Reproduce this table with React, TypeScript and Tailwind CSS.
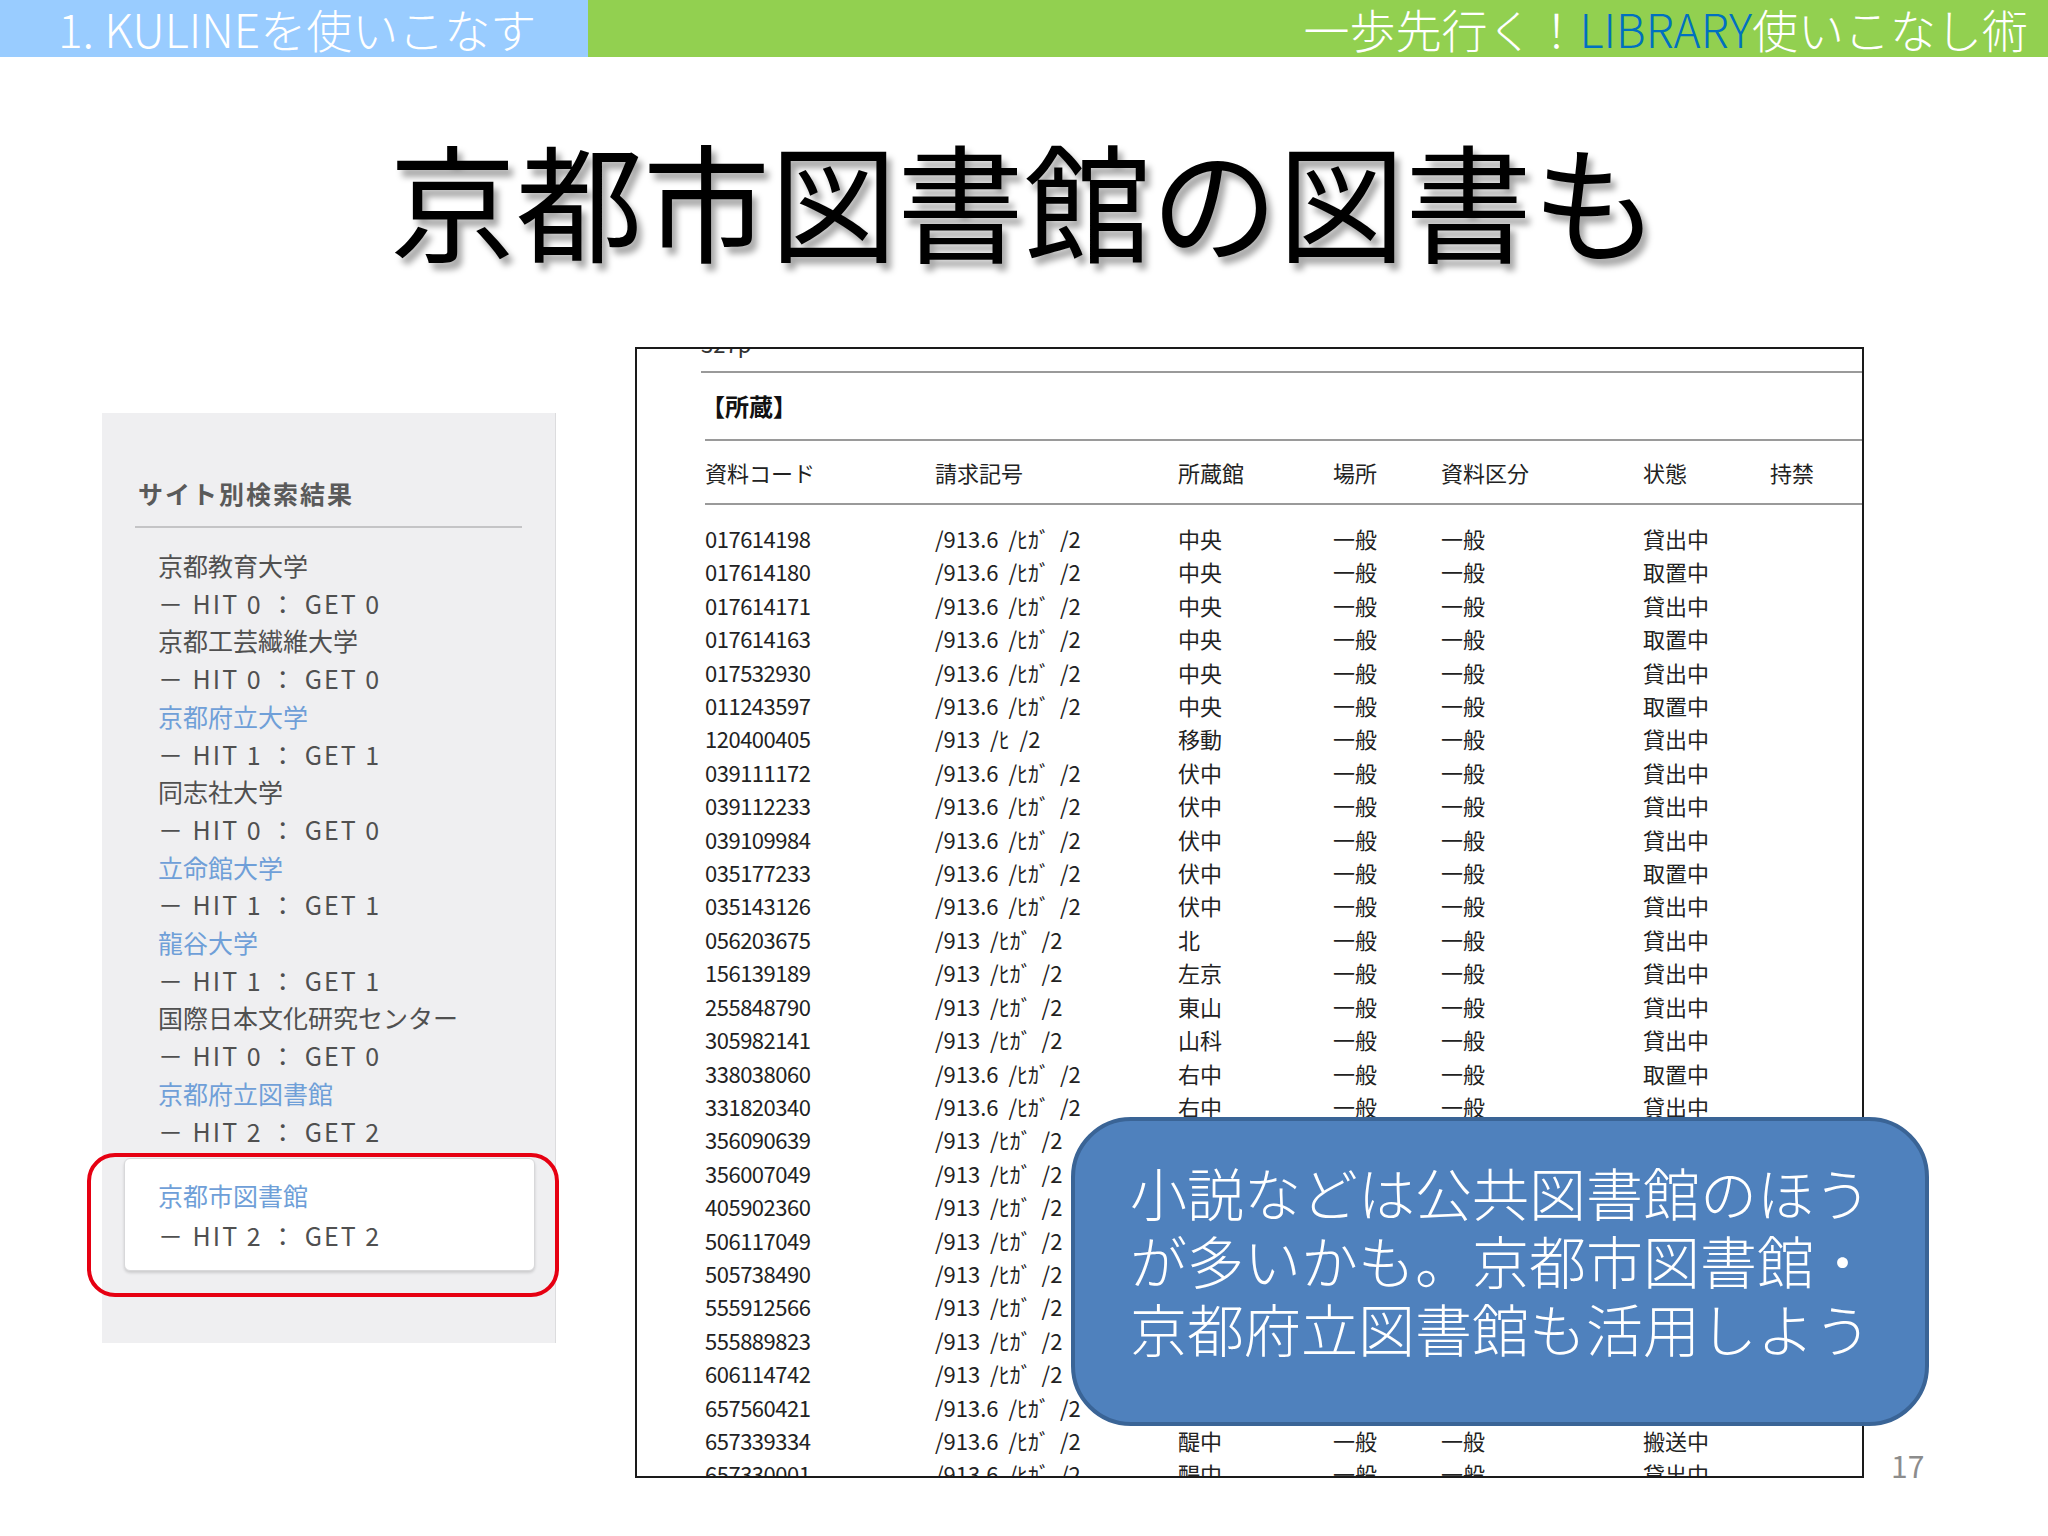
import React from 'react';

const JP = '[font-family:"Noto_Sans_CJK_JP","Noto_Sans",sans-serif]';

type Site = { name: string; hit: number; link?: boolean };

const sites: Site[] = [
  { name: '京都教育大学', hit: 0 },
  { name: '京都工芸繊維大学', hit: 0 },
  { name: '京都府立大学', hit: 1, link: true },
  { name: '同志社大学', hit: 0 },
  { name: '立命館大学', hit: 1, link: true },
  { name: '龍谷大学', hit: 1, link: true },
  { name: '国際日本文化研究センター', hit: 0 },
  { name: '京都府立図書館', hit: 2, link: true },
];

// code, call number, branch, status
const rows: string[][] = [
  ['017614198', '/913.6 /ﾋｶﾞ /2', '中央', '貸出中'],
  ['017614180', '/913.6 /ﾋｶﾞ /2', '中央', '取置中'],
  ['017614171', '/913.6 /ﾋｶﾞ /2', '中央', '貸出中'],
  ['017614163', '/913.6 /ﾋｶﾞ /2', '中央', '取置中'],
  ['017532930', '/913.6 /ﾋｶﾞ /2', '中央', '貸出中'],
  ['011243597', '/913.6 /ﾋｶﾞ /2', '中央', '取置中'],
  ['120400405', '/913 /ﾋ /2', '移動', '貸出中'],
  ['039111172', '/913.6 /ﾋｶﾞ /2', '伏中', '貸出中'],
  ['039112233', '/913.6 /ﾋｶﾞ /2', '伏中', '貸出中'],
  ['039109984', '/913.6 /ﾋｶﾞ /2', '伏中', '貸出中'],
  ['035177233', '/913.6 /ﾋｶﾞ /2', '伏中', '取置中'],
  ['035143126', '/913.6 /ﾋｶﾞ /2', '伏中', '貸出中'],
  ['056203675', '/913 /ﾋｶﾞ /2', '北', '貸出中'],
  ['156139189', '/913 /ﾋｶﾞ /2', '左京', '貸出中'],
  ['255848790', '/913 /ﾋｶﾞ /2', '東山', '貸出中'],
  ['305982141', '/913 /ﾋｶﾞ /2', '山科', '貸出中'],
  ['338038060', '/913.6 /ﾋｶﾞ /2', '右中', '取置中'],
  ['331820340', '/913.6 /ﾋｶﾞ /2', '右中', '貸出中'],
  ['356090639', '/913 /ﾋｶﾞ /2', '右中', '貸出中'],
  ['356007049', '/913 /ﾋｶﾞ /2', '右中', '貸出中'],
  ['405902360', '/913 /ﾋｶﾞ /2', '西', '貸出中'],
  ['506117049', '/913 /ﾋｶﾞ /2', '南', '貸出中'],
  ['505738490', '/913 /ﾋｶﾞ /2', '南', '貸出中'],
  ['555912566', '/913 /ﾋｶﾞ /2', '久我', '貸出中'],
  ['555889823', '/913 /ﾋｶﾞ /2', '久我', '貸出中'],
  ['606114742', '/913 /ﾋｶﾞ /2', '洛西', '貸出中'],
  ['657560421', '/913.6 /ﾋｶﾞ /2', '醍中', '貸出中'],
  ['657339334', '/913.6 /ﾋｶﾞ /2', '醍中', '搬送中'],
  ['657330001', '/913.6 /ﾋｶﾞ /2', '醍中', '貸出中'],
];

const headers = ['資料コード', '請求記号', '所蔵館', '場所', '資料区分', '状態', '持禁'];
const grid = 'grid grid-cols-[230px_243px_155px_108px_202px_127px_1fr]';

function SidePanel() {
  return (
    <div className="mt-[66px] h-[930px] w-[454px] shrink-0 border-r border-[#dcdcde] bg-[#efeff1] pt-[64px]">
      <h3 className="pl-[36px] text-[25px] font-bold leading-[32px] tracking-[2px] text-[#5a5a5a]">サイト別検索結果</h3>
      <div className="mx-[33px] mt-[17px] h-[2px] bg-[#c4c4c6]" />
      <div className="mt-[19px] pl-[56px] text-[25px] leading-[37.7px] text-[#505050]">
        {sites.map((s) => (
          <div key={s.name}>
            <div className={s.link ? 'text-[#6f9fd8]' : ''}>{s.name}</div>
            <div className="tracking-[2px]">－ HIT {s.hit} ： GET {s.hit}</div>
          </div>
        ))}
      </div>
      <div className="ml-[22px] mt-[8px] h-[113px] w-[411px] rounded-[6px] border border-[#d8d8da] bg-white pl-[33px] pt-[16px] text-[25px] leading-[40px] text-[#505050] shadow-[0_2px_3px_rgba(0,0,0,0.15)]">
        <div className="text-[#6f9fd8]">京都市図書館</div>
        <div className="tracking-[2px]">－ HIT 2 ： GET 2</div>
      </div>
    </div>
  );
}

function HoldingsTable() {
  return (
    <div className="h-[1131px] w-[1229px] shrink-0 overflow-hidden border-2 border-[#1a1a1a] bg-white text-[#222]">
      <div className="-mt-[16px] pl-[64px] text-[22px] leading-[20px] text-[#333]">327p</div>
      <div className="ml-[64px] mt-[18px] h-[2px] bg-[#9a9a9a]" />
      <div className="pl-[64px] text-[24px] font-bold leading-[66px] text-[#111]">【所蔵】</div>
      <div className="ml-[68px] h-[2px] bg-[#9a9a9a]" />
      <div className={`${grid} pl-[68px] text-[22px] leading-[62px]`}>
        {headers.map((h) => (
          <div key={h}>{h}</div>
        ))}
      </div>
      <div className="ml-[68px] h-[2px] bg-[#9a9a9a]" />
      <div className="pt-[17px]">
        {rows.map(([code, call, branch, status]) => (
          <div key={code} className={`${grid} pl-[68px] text-[22px] leading-[33.4px]`}>
            <div className="tracking-[-0.5px]">{code}</div>
            <div className="whitespace-pre">{call.replace(/ /g, '  ')}</div>
            <div>{branch}</div>
            <div>一般</div>
            <div>一般</div>
            <div>{status}</div>
            <div />
          </div>
        ))}
      </div>
    </div>
  );
}

export default function App() {
  return (
    <div className={`relative h-[1536px] w-[2048px] overflow-hidden bg-white ${JP}`}>
      <div className="flex h-[57px]">
        <div className="flex w-[588px] items-center bg-[#99ccff] pl-[58px] text-[46px] font-light leading-[57px] text-white">
          1. KULINEを使いこなす
        </div>
        <div className="flex flex-1 items-center justify-end bg-[#92d050] pr-[20px] text-[46px] font-light leading-[57px] text-white">
          一歩先行く！<span className="text-[#0070c0]">LIBRARY</span>使いこなし術
        </div>
      </div>

      <h1 className="mt-[78px] text-center text-[127px] leading-[127px] text-black [text-shadow:5px_7px_6px_rgba(0,0,0,0.35)]">
        京都市図書館の図書も
      </h1>

      <div className="mt-[85px] flex gap-[79px] pl-[102px]">
        <SidePanel />
        <HoldingsTable />
      </div>

      <div className="pointer-events-none absolute left-[87px] top-[1153px] h-[144px] w-[472px] rounded-[28px] border-[4px] border-[#e60012]" />

      <div className="absolute left-[1071px] top-[1117px] h-[309px] w-[858px] rounded-[60px] border-[4px] border-[#3a6496] bg-[#4f81bd] pl-[55px] pt-[36px] text-[57px] font-light leading-[68px] text-white">
        <div>小説などは公共図書館のほう</div>
        <div>が多いかも。京都市図書館・</div>
        <div>京都府立図書館も活用しよう</div>
      </div>

      <div className="absolute left-[1891px] top-[1447px] text-[30px] leading-[36px] text-[#8c8c8c]">17</div>
    </div>
  );
}
